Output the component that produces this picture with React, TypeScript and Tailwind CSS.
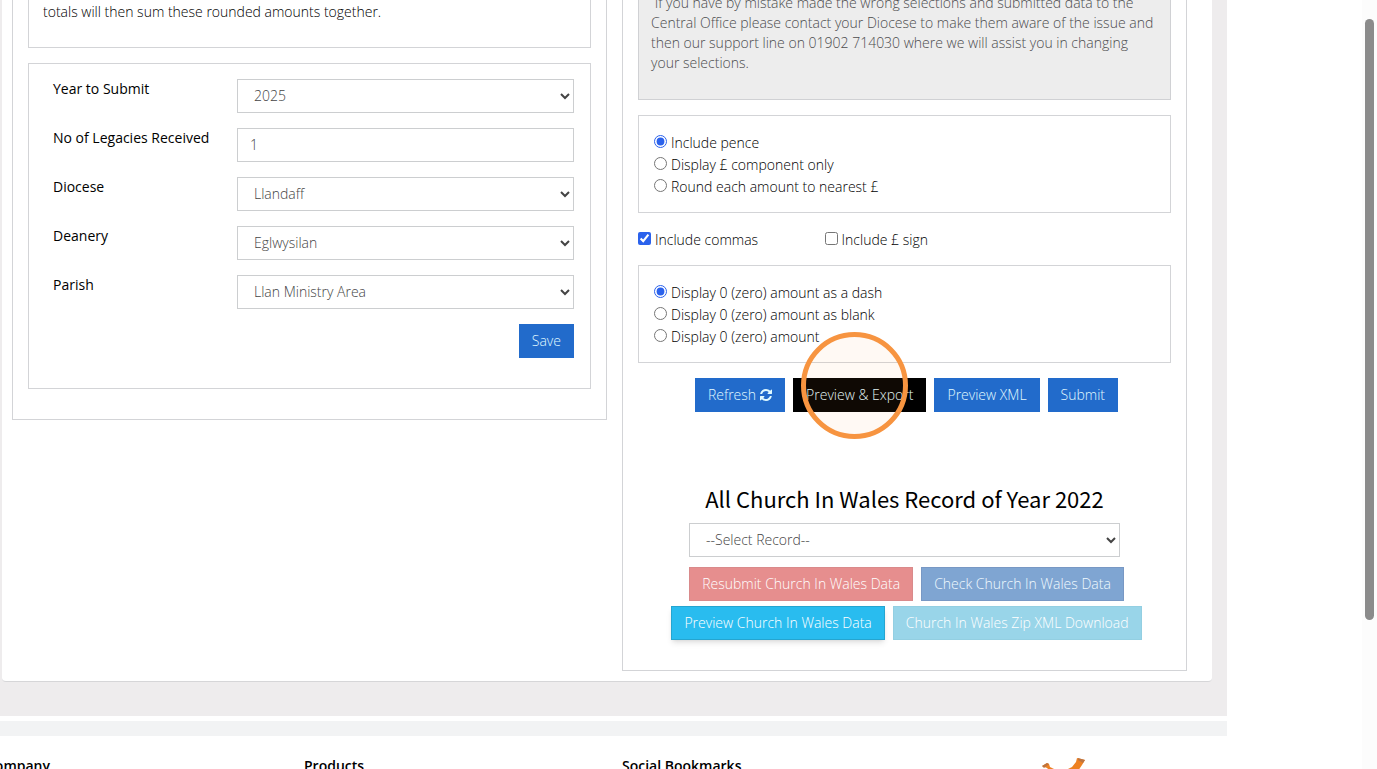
import React from 'react';
import clsx from 'clsx';

const fieldClass =
    'block h-[34px] w-full rounded-none border border-[#ccced0] bg-white px-3 pb-0.5 text-sm font-light text-[#444]';

function Field({ id, label, children }: { id: string; label: string; children: React.ReactNode }) {
    return (
        <div className="flex">
            <label htmlFor={id} className="w-[184px] shrink-0 text-sm font-normal leading-5 text-black">
                {label}
            </label>
            <div className="flex-1">{children}</div>
        </div>
    );
}

function SelectField({ id, label, value }: { id: string; label: string; value: string }) {
    return (
        <Field id={id} label={label}>
            <select id={id} className={fieldClass}>
                <option>{value}</option>
            </select>
        </Field>
    );
}

interface ChoiceProps {
    type: 'radio' | 'checkbox';
    name: string;
    label: string;
    checked?: boolean;
}

function Choice({ type, name, label, checked }: ChoiceProps) {
    return (
        <label className="flex items-center gap-1 pt-0.5 text-sm leading-5 text-black">
            <input
                type={type}
                name={name}
                defaultChecked={checked}
                className="mb-[3px] h-[13px] w-[13px] accent-[#2b62ec]"
            />
            {label}
        </label>
    );
}

function Button({ className, children }: { className: string; children: React.ReactNode }) {
    return (
        <button
            type="button"
            className={clsx('relative flex h-[34px] items-center border px-3 text-sm font-light', className)}
        >
            {children}
        </button>
    );
}

function RefreshIcon() {
    return (
        <svg viewBox="0 0 1536 1536" className="ml-1 h-3 w-3" fill="currentColor" aria-hidden="true">
            <path d="M1511 928q0 5-1 7-64 268-268 434.500T764 1536q-146 0-282.500-55T238 1324l-129 129q-19 19-45 19t-45-19-19-45V960q0-26 19-45t45-19h448q26 0 45 19t19 45-19 45l-137 137q71 66 161 102t187 36q134 0 250-65t186-179q11-17 53-117 8-23 30-23h192q13 0 22.500 9.500t9.500 22.500zm25-800v448q0 26-19 45t-45 19h-448q-26 0-45-19t-19-45 19-45l138-138Q969 256 768 256q-134 0-250 65T332 500q-11 17-53 117-8 23-30 23H50q-13 0-22.500-9.500T18 608v-7q65-268 270-434.500T768 0q146 0 284 55.500T1297 212l130-129q19-19 45-19t45 19 19 45z" />
        </svg>
    );
}

const primary = 'border-[#226bcb] bg-[#226bcb] text-[#e0faff]';

export default function App() {
    return (
        <div className="flex h-screen overflow-hidden bg-white font-['Open_Sans',sans-serif] font-light text-black">
            <div className="min-w-0 flex-1">
                <main className="bg-[#eeeced] pb-[34px] pl-0.5 pr-[15px]">
                    <div className="grid grid-cols-[595fr_565fr] items-start gap-[15px] rounded-b border-b border-[#d6d6d8] bg-white pb-2.5 pl-2.5 pr-[25px]">
                        {/* Submission details */}
                        <section className="border border-t-0 border-[#d3d4d7] px-[15px] pb-[30px]">
                            <div className="mb-[15px] border border-t-0 border-[#d3d4d7] px-3.5 pb-[25px] pt-0.5">
                                <p className="text-sm leading-5">totals will then sum these rounded amounts together.</p>
                            </div>
                            <form className="flex flex-col gap-[15px] border border-[#d3d4d7] pb-[30px] pl-6 pr-4 pt-[15px]">
                                <SelectField id="year" label="Year to Submit" value="2025" />
                                <Field id="legacies" label="No of Legacies Received">
                                    <input id="legacies" type="text" defaultValue="1" className={fieldClass} />
                                </Field>
                                <SelectField id="diocese" label="Diocese" value="Llandaff" />
                                <SelectField id="deanery" label="Deanery" value="Eglwysilan" />
                                <SelectField id="parish" label="Parish" value="Llan Ministry Area" />
                                <div className="flex justify-end">
                                    <Button className={primary}>Save</Button>
                                </div>
                            </form>
                        </section>

                        {/* Export options */}
                        <section className="border border-t-0 border-[#d3d4d7] px-[15px] pb-[30px]">
                            <div className="mb-[15px] overflow-hidden border border-t-0 border-[#d0d1d4] bg-[#ededed] px-3 pb-[26px]">
                                <p className="-mt-[7px] text-sm leading-5 text-[#4c4c4e]">
                                    &nbsp;If you have by mistake made the wrong selections and submitted data to the Central
                                    Office please contact your Diocese to make them aware of the issue and then our support
                                    line on 01902 714030 where we will assist you in changing your selections.
                                </p>
                            </div>

                            <div className="border border-[#d3d4d7] p-[15px]">
                                <Choice type="radio" name="pence" label="Include pence" checked />
                                <Choice type="radio" name="pence" label="Display £ component only" />
                                <Choice type="radio" name="pence" label="Round each amount to nearest £" />
                            </div>

                            <div className="flex py-[15px]">
                                <div className="w-[35%]">
                                    <Choice type="checkbox" name="commas" label="Include commas" checked />
                                </div>
                                <Choice type="checkbox" name="sign" label="Include £ sign" />
                            </div>

                            <div className="border border-[#d3d4d7] p-[15px]">
                                <Choice type="radio" name="zero" label="Display 0 (zero) amount as a dash" checked />
                                <Choice type="radio" name="zero" label="Display 0 (zero) amount as blank" />
                                <Choice type="radio" name="zero" label="Display 0 (zero) amount" />
                            </div>

                            <div className="flex justify-center gap-2 pl-1 pt-[15px]">
                                <Button className={primary}>
                                    Refresh <RefreshIcon />
                                </Button>
                                <Button className="border-black bg-black text-[#e0faff]">
                                    Preview &amp; Export
                                    {/* click marker */}
                                    <span className="pointer-events-none absolute -top-[47px] left-[7px] z-10 h-[107px] w-[107px] rounded-full border-[5px] border-[#f79440] bg-[#f79440]/6" />
                                </Button>
                                <Button className={primary}>Preview XML</Button>
                                <Button className={primary}>Submit</Button>
                            </div>

                            <h3 className="mt-[73px] text-center font-['Noto_Sans_CJK_SC',sans-serif] text-[22px] font-normal leading-[26px]">
                                All Church In Wales Record of Year 2022
                            </h3>
                            <div className="px-[51px] pt-3">
                                <select aria-label="Record" className={fieldClass}>
                                    <option>--Select Record--</option>
                                </select>
                            </div>
                            <div className="flex justify-center gap-2 pl-1 pt-2.5">
                                <Button className="border-[#d98a8b] bg-[#e68e8e] text-white">
                                    Resubmit Church In Wales Data
                                </Button>
                                <Button className="border-[#7898c4] bg-[#7fa5d2] text-[#f0faff]">
                                    Check Church In Wales Data
                                </Button>
                            </div>
                            <div className="flex justify-center gap-2 pl-1 pt-[5px]">
                                <Button className="border-[#25a5d0] bg-[#29bcef] text-white shadow-md">
                                    Preview Church In Wales Data
                                </Button>
                                <Button className="border-[#93cfe2] bg-[#99d5e9] text-white">
                                    Church In Wales Zip XML Download
                                </Button>
                            </div>
                        </section>
                    </div>
                </main>

                <footer className="mt-[5px] border-t-[15px] border-[#f2f3f4]">
                    <div className="-ml-3.5 grid grid-cols-[318fr_318fr_420fr_185fr] pt-5 text-sm font-semibold leading-5">
                        <h4>Company</h4>
                        <h4>Products</h4>
                        <h4>Social Bookmarks</h4>
                        <svg viewBox="0 0 46 30" className="h-[30px] w-[46px]" aria-hidden="true">
                            <path d="M0 10l5-3 2 1 1 3 4 2h14l4-2 4-5 1-4 8 2-3 5-6 9-7 11h-9L8 15l-3-3z" fill="#ee8122" />
                            <path d="M0 10l5-3 2 1-5 4zM36 2l7 2-2 3-5-3z" fill="#bd7440" />
                        </svg>
                    </div>
                </footer>
            </div>

            {/* Right gutter with the scroll track */}
            <aside className="flex w-[150px] shrink-0 justify-end">
                <div className="w-[15px] bg-[#fcfcfc] pl-[3px] pt-[19px]">
                    <div className="h-[601px] w-[9px] rounded-full bg-[#8b8b8b]" />
                </div>
            </aside>
        </div>
    );
}
